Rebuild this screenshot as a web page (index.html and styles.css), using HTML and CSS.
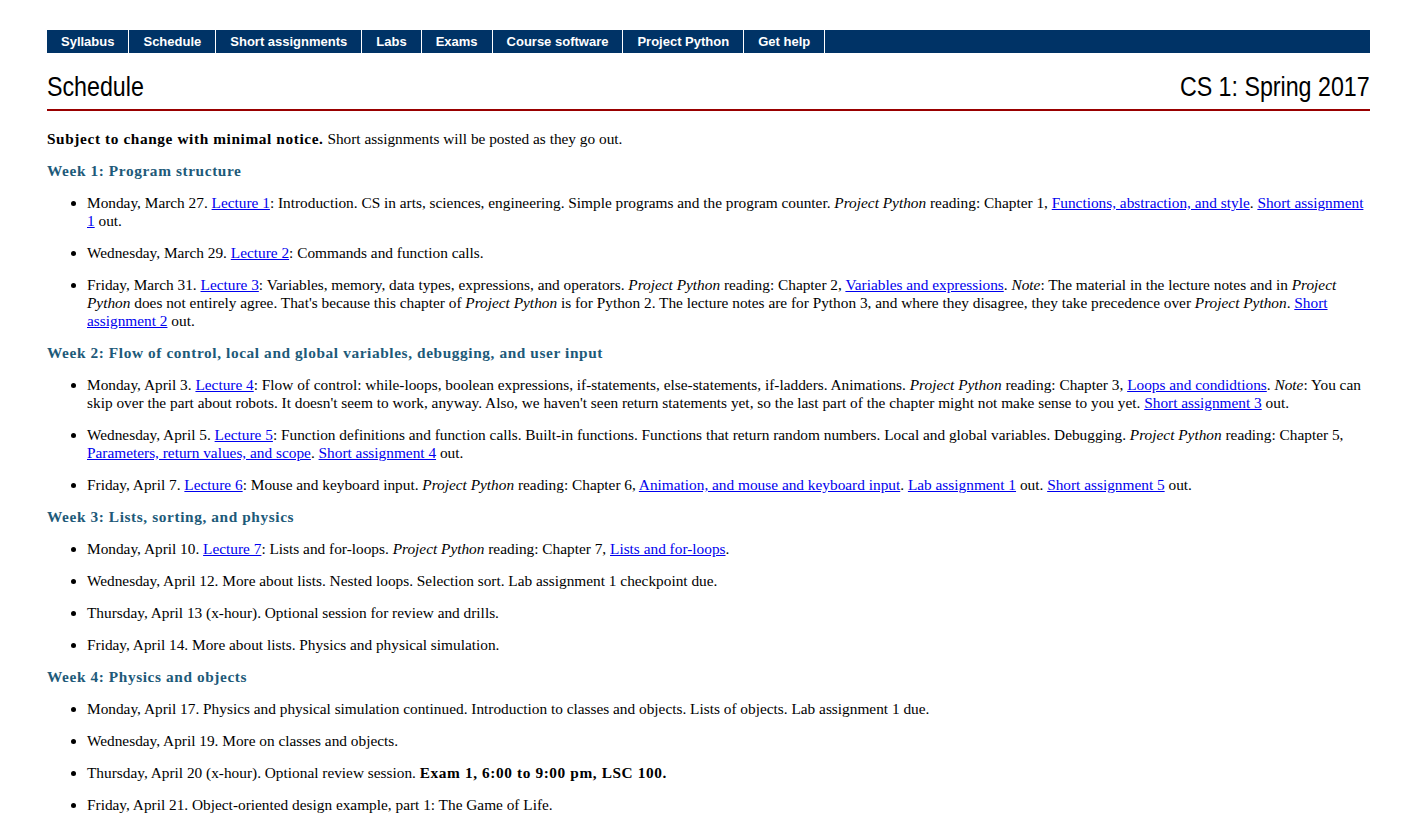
FILE: index.html
```html
<!DOCTYPE html>
<html>
<head>
<meta charset="utf-8">
<title>Schedule</title>
<link rel="stylesheet" href="styles.css">
</head>
<body>
<div class="page">
  <nav class="nav">
    <a class="nav-item" href="#">Syllabus</a>
    <a class="nav-item" href="#">Schedule</a>
    <a class="nav-item" href="#">Short assignments</a>
    <a class="nav-item" href="#">Labs</a>
    <a class="nav-item" href="#">Exams</a>
    <a class="nav-item" href="#">Course software</a>
    <a class="nav-item" href="#">Project Python</a>
    <a class="nav-item" href="#">Get help</a>
  </nav>
  <header class="title-bar">
    <h1 class="title"><span class="narrow narrow-left">Schedule</span></h1>
    <div class="course"><span class="narrow narrow-right">CS 1: Spring 2017</span></div>
  </header>
  <main class="content">
    <p class="intro"><b>Subject to change with minimal notice.</b> Short assignments will be posted as they go out.</p>

    <h2 class="week">Week 1: Program structure</h2>
    <ul class="days">
      <li>Monday, March 27. <a href="#">Lecture 1</a>: Introduction. CS in arts, sciences, engineering. Simple programs and the program counter. <i>Project Python</i> reading: Chapter 1, <a href="#">Functions, abstraction, and style</a>. <a href="#">Short assignment 1</a> out.</li>
      <li>Wednesday, March 29. <a href="#">Lecture 2</a>: Commands and function calls.</li>
      <li>Friday, March 31. <a href="#">Lecture 3</a>: Variables, memory, data types, expressions, and operators. <i>Project Python</i> reading: Chapter 2, <a href="#">Variables and expressions</a>. <i>Note</i>: The material in the lecture notes and in <i>Project Python</i> does not entirely agree. That's because this chapter of <i>Project Python</i> is for Python 2. The lecture notes are for Python 3, and where they disagree, they take precedence over <i>Project Python</i>. <a href="#">Short assignment 2</a> out.</li>
    </ul>

    <h2 class="week">Week 2: Flow of control, local and global variables, debugging, and user input</h2>
    <ul class="days">
      <li>Monday, April 3. <a href="#">Lecture 4</a>: Flow of control: while-loops, boolean expressions, if-statements, else-statements, if-ladders. Animations. <i>Project Python</i> reading: Chapter 3, <a href="#">Loops and condidtions</a>. <i>Note</i>: You can skip over the part about robots. It doesn't seem to work, anyway. Also, we haven't seen return statements yet, so the last part of the chapter might not make sense to you yet. <a href="#">Short assignment 3</a> out.</li>
      <li>Wednesday, April 5. <a href="#">Lecture 5</a>: Function definitions and function calls. Built-in functions. Functions that return random numbers. Local and global variables. Debugging. <i>Project Python</i> reading: Chapter 5, <a href="#">Parameters, return values, and scope</a>. <a href="#">Short assignment 4</a> out.</li>
      <li>Friday, April 7. <a href="#">Lecture 6</a>: Mouse and keyboard input. <i>Project Python</i> reading: Chapter 6, <a href="#">Animation, and mouse and keyboard input</a>. <a href="#">Lab assignment 1</a> out. <a href="#">Short assignment 5</a> out.</li>
    </ul>

    <h2 class="week">Week 3: Lists, sorting, and physics</h2>
    <ul class="days">
      <li>Monday, April 10. <a href="#">Lecture 7</a>: Lists and for-loops. <i>Project Python</i> reading: Chapter 7, <a href="#">Lists and for-loops</a>.</li>
      <li>Wednesday, April 12. More about lists. Nested loops. Selection sort. Lab assignment 1 checkpoint due.</li>
      <li>Thursday, April 13 (x-hour). Optional session for review and drills.</li>
      <li>Friday, April 14. More about lists. Physics and physical simulation.</li>
    </ul>

    <h2 class="week">Week 4: Physics and objects</h2>
    <ul class="days">
      <li>Monday, April 17. Physics and physical simulation continued. Introduction to classes and objects. Lists of objects. Lab assignment 1 due.</li>
      <li>Wednesday, April 19. More on classes and objects.</li>
      <li>Thursday, April 20 (x-hour). Optional review session. <b>Exam 1, 6:00 to 9:00 pm, LSC 100.</b></li>
      <li>Friday, April 21. Object-oriented design example, part 1: The Game of Life.</li>
    </ul>
  </main>
</div>
</body>
</html>
```

FILE: styles.css
```css
html, body {
  margin: 0;
  padding: 0;
  background: #ffffff;
}

.page {
  margin: 0 48px 0 47px;
  padding-top: 30px;
}

.nav {
  display: flex;
  background: #003366;
  height: 23px;
}

.nav-item {
  display: block;
  padding: 0 14px;
  line-height: 23px;
  color: #ffffff;
  text-decoration: none;
  font-family: "Liberation Sans", Arial, sans-serif;
  font-weight: bold;
  font-size: 13px;
  border-right: 1px solid #ffffff;
}

.title-bar {
  display: flex;
  justify-content: space-between;
  align-items: flex-end;
  border-bottom: 2px solid #990000;
  padding: 19px 0 7px;
  font-family: "Liberation Sans", Arial, sans-serif;
  color: #000000;
}

.title,
.course {
  margin: 0;
  font-weight: normal;
  font-size: 27px;
  line-height: 30px;
}

.narrow {
  display: inline-block;
  transform: scaleX(0.86);
}

.narrow-left {
  transform-origin: left center;
}

.narrow-right {
  transform-origin: right center;
}

.content {
  font-family: "Liberation Serif", "Times New Roman", serif;
  font-size: 15.33px;
  line-height: 18px;
  color: #000000;
  padding-top: 19px;
}

.intro {
  margin: 0 0 14px;
}

.intro b,
.days b {
  letter-spacing: 0.6px;
}

.week {
  margin: 0 0 14px;
  font-size: 15.33px;
  letter-spacing: 0.6px;
  line-height: 18px;
  font-weight: bold;
  color: #1d5a79;
}

.days {
  margin: 0 0 14px;
  padding-left: 40px;
}

.days li {
  margin-bottom: 14px;
}

.days li:last-child {
  margin-bottom: 0;
}

.content a {
  color: #0000ee;
}
```
